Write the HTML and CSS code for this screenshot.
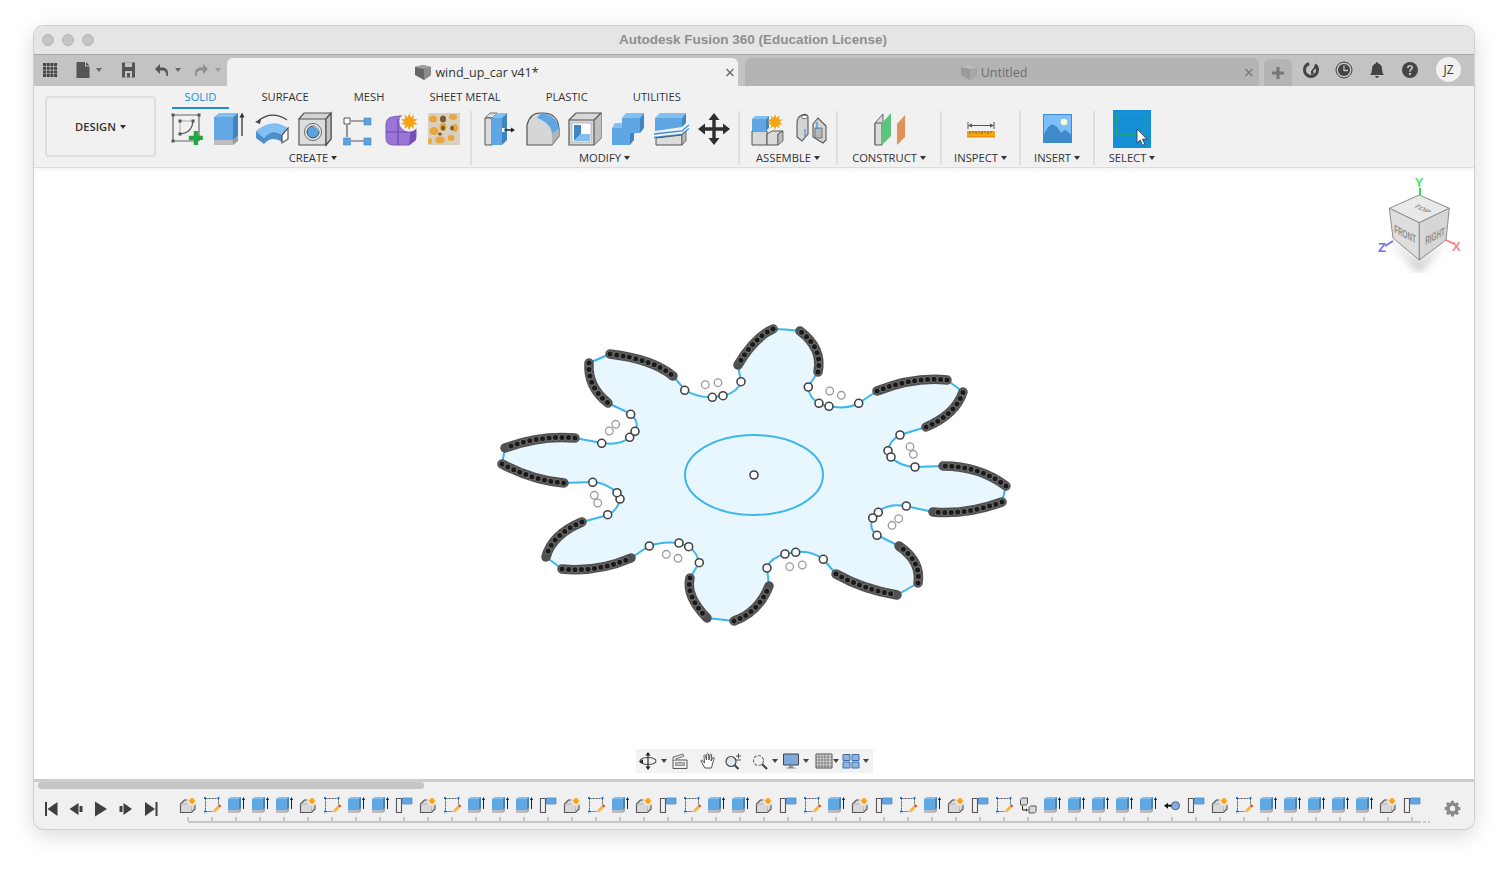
FILE: index.html
```html
<!DOCTYPE html>
<html lang="en">
<head>
<meta charset="utf-8">
<title>Autodesk Fusion 360 (Education License)</title>
<link rel="stylesheet" href="styles.css">
</head>
<body>
<svg class="defs" width="0" height="0" aria-hidden="true">
  <defs>
    <symbol id="star" viewBox="0 0 20 20"><path d="M10 0l1.8 5 3.8-3.2-1 4.9 5 .6-4.2 2.7 4.2 2.700-5 .6 1 4.900-3.800-3.200L10 20l-1.800-5-3.800 3.200 1-4.900-5-.6 4.200-2.700L.4 7.300l5-.6-1-4.900 3.800 3.200z" fill="#f5a313"/></symbol>

    <symbol id="i-sketch" viewBox="0 0 36 36">
      <path d="M5 4h26M5 4v26M5 30h26M31 4v26" fill="none" stroke="#666" stroke-width="1.2"/>
      <path d="M12 10h13M12 10v13" fill="none" stroke="#aaa"/>
      <path d="M25 10Q24 22 12 23" fill="none" stroke="#555" stroke-width="1.200"/>
      <path d="M3.500 2.500h3v3h-3zM29.500 2.500h3v3h-3zM3.500 28.500h3v3h-3zM10.500 8.500h3v3h-3zM23.500 8.500h3v3h-3zM10.500 21.500h3v3h-3z" fill="#555"/>
      <path d="M25.700 20h4.400v4.700h4.700v4.400h-4.700v4.900h-4.400v-4.900h-4.900v-4.400h4.900z" fill="#1fa83f"/>
    </symbol>
    <symbol id="i-extrude" viewBox="0 0 36 36">
      <path d="M3 29h19v5H3z" fill="#bdbdbd"/><path d="M22 29l5-4v5l-5 4z" fill="#9b9b9b"/>
      <path d="M3 6l5-4h19l-5 4z" fill="#82c0f4"/><path d="M3 6h19v23H3z" fill="#63a8e4"/><path d="M22 6l5-4v23l-5 4z" fill="#3f86c0"/>
      <path d="M31 25V4" stroke="#333" stroke-width="1.300"/><path d="M31 1.500l-2.500 5h5z" fill="#333"/>
    </symbol>
    <symbol id="i-revolve" viewBox="0 0 36 36">
      <path d="M4 10Q18-1 33 9" fill="none" stroke="#444" stroke-width="1.200"/><path d="M1 11l6-3-1 5z" fill="#444"/>
      <path d="M2 20Q18 6 34 17l-6 7Q18 16 10 27z" fill="#82c0f4"/>
      <path d="M2 20l8 7v6l-8-6zM10 27Q18 17 28 24v7Q18 24 10 33z" fill="#4a90cc"/>
      <path d="M28 24l6-7v11l-6 4z" fill="#fff" stroke="#555" stroke-width="1.200"/>
    </symbol>
    <symbol id="i-hole" viewBox="0 0 36 36">
      <path d="M2 8l5-6h27v26l-5 6z" fill="#d4d4d4" stroke="#555" stroke-width="1.200"/>
      <path d="M2 8h27v26H2z" fill="#dcdcdc" stroke="#555" stroke-width="1.200"/><path d="M29 8l5-6" stroke="#555" stroke-width="1.200"/>
      <path d="M29 8l5-6v26l-5 6z" fill="#c4c4c4" stroke="#555" stroke-width="1.200"/>
      <circle cx="16" cy="21" r="8.500" fill="#eee" stroke="#666"/><circle cx="16" cy="21" r="6" fill="#5aa2e0" stroke="#444"/>
      <path d="M15 15.500a6 6 0 0 1 6.500 6 5 5 0 0 0-6.500-6z" fill="#eee"/>
    </symbol>
    <symbol id="i-pattern" viewBox="0 0 36 36">
      <path d="M11 10h13M7 14v12M11 30h13" stroke="#555" stroke-width="1.200"/>
      <path d="M4 7h6v6H4z" fill="#fff" stroke="#555"/>
      <path d="M24 7h7v7h-7zM3.500 27h7v7h-7zM24 27h7v7h-7z" fill="#5aa2e0" stroke="#4a85ba" stroke-width=".6"/>
    </symbol>
    <symbol id="i-form" viewBox="0 0 36 36">
      <path d="M3 14Q3 7 9 6l15-2 9 8v14q0 4-3 5l-4 3H10q-7 0-7-7z" fill="#9b74d8" stroke="#7f5cb8"/>
      <path d="M28 13l5-2v15q0 4-3 5l-4 3z" fill="#7650b4"/>
      <path d="M3 21h25M15 8v26" stroke="#6a4aa8" stroke-width="1.200"/>
      <circle cx="26.300" cy="10.700" r="10" fill="#f1f1f1"/>
      <use href="#star" x="17.500" y="2" width="17.500" height="17.500"/>
    </symbol>
    <symbol id="i-mesh" viewBox="0 0 36 36">
      <path d="M2 2h32v32H2z" fill="#d9d0c2"/>
      <g fill="#e8a63c">
        <ellipse cx="7" cy="8" rx="4" ry="3.500"/><ellipse cx="27" cy="6" rx="4" ry="3"/><ellipse cx="8" cy="20" rx="4.500" ry="4"/><ellipse cx="17" cy="16" rx="3.500" ry="4"/><ellipse cx="29" cy="17" rx="3" ry="4"/><ellipse cx="14" cy="29" rx="5" ry="3.500"/><ellipse cx="25" cy="27" rx="3.500" ry="3"/><ellipse cx="4" cy="30" rx="2" ry="3"/>
      </g>
      <g fill="#7c5a26"><ellipse cx="17" cy="8" rx="3" ry="3.500"/><ellipse cx="17" cy="17" rx="2" ry="2.500"/><ellipse cx="26" cy="17" rx="1.800" ry="2.500"/><ellipse cx="14" cy="23" rx="2" ry="1.500"/></g>
    </symbol>
    <symbol id="i-press" viewBox="0 0 36 36">
      <path d="M4 7l5-5h7l-5 5z" fill="#e0e0e0" stroke="#555" stroke-width=".8"/><path d="M4 7h7v27H4z" fill="#dcdcdc" stroke="#555"/>
      <path d="M11 7l5-5h10l-5 5z" fill="#82c0f4"/><path d="M11 7h10v27H11z" fill="#5fa6e4"/><path d="M21 7l5-5v27l-5 5z" fill="#3f86c0"/>
      <path d="M23 19h8" stroke="#222" stroke-width="1.300"/><path d="M34 19l-4-2.500v5z" fill="#222"/><path d="M21 17v4h2.500v-4z" fill="#fff"/>
    </symbol>
    <symbol id="i-fillet" viewBox="0 0 36 36">
      <path d="M3 14Q6 2 16 2h3Q34 2 35 18v5l-6 9V34H3z" fill="#d6d6d6"/>
      <path d="M3 34V14Q6 2 16 2h3Q34 2 35 18v7l-7 9z" fill="none" stroke="#555" stroke-width="1.200"/>
      <path d="M17 2Q33 4 35 18l-7 5Q27 12 13 7z" fill="#5fa6e4"/>
      <path d="M28 23l7-5v7l-7 9z" fill="#b4b4b4"/>
    </symbol>
    <symbol id="i-shell" viewBox="0 0 36 36">
      <path d="M2 9l7-7h25v25l-7 7H2z" fill="#d8d8d8" stroke="#555" stroke-width="1.200"/>
      <path d="M27 9l7-7v25l-7 7z" fill="#c0c0c0"/><path d="M2 9h25v25M27 9l7-7" fill="none" stroke="#555" stroke-width="1.200"/>
      <path d="M5 12h19v19H5z" fill="#fff" stroke="#999" stroke-width=".6"/>
      <path d="M7 14h7v9l-7 7z" fill="#3f86c0"/><path d="M14 23h9v7H7z" fill="#82c0f4"/>
    </symbol>
    <symbol id="i-combine" viewBox="0 0 36 36">
      <path d="M12 7l4-5h18l-4 5z" fill="#82c0f4"/><path d="M2 17l3-5h10v5z" fill="#82c0f4"/>
      <path d="M12 7h18v15H20v12H2V17h10z" fill="#5fa6e4"/><path d="M30 7l4-5v15l-4 5zM20 22h5l-5 5zM20 27l4-5v7l-4 5z" fill="#3f86c0"/>
    </symbol>
    <symbol id="i-split" viewBox="0 0 36 36">
      <path d="M2 7l5-5h26l-4 5z" fill="#82c0f4"/><path d="M2 7h27v9l-27 4z" fill="#5fa6e4"/><path d="M29 7l4-5v10l-4 4z" fill="#3f86c0"/>
      <path d="M1 23l28-3 7-6" fill="none" stroke="#2f8ee0" stroke-width="1.300"/><path d="M1 26.500l28-3 7-6" fill="none" stroke="#2f8ee0" stroke-width="1.300"/>
      <path d="M3 27l26-3v10H3z" fill="#dcdcdc" stroke="#555"/><path d="M29 24l4-4v10l-4 4z" fill="#bbb" stroke="#555" stroke-width=".8"/>
    </symbol>
    <symbol id="i-move" viewBox="0 0 36 36">
      <path d="M18 2l5.500 7h-3.800v7.300H27v-3.800l7 5.500-7 5.500v-3.800h-7.300V27h3.800L18 34l-5.500-7h3.800v-7.300H9v3.800L2 18l7-5.500v3.800h7.300V9h-3.800z" fill="#2e2e2e"/>
    </symbol>
    <symbol id="i-component" viewBox="0 0 36 36">
      <path d="M3 20h15v14H3z" fill="#d8d8d8" stroke="#555"/><path d="M18 23l5-3h11l-5 3v11H18z" fill="#dcdcdc" stroke="#555"/><path d="M29 23l5-3v10l-5 4z" fill="#bdbdbd" stroke="#555" stroke-width=".8"/>
      <path d="M3 8l3-3h14l-3 3z" fill="#82c0f4"/><path d="M3 8h14v12H3z" fill="#5fa6e4"/><path d="M17 8l3-3v12l-3 3z" fill="#3f86c0"/>
      <use href="#star" x="18" y="3" width="16" height="16"/>
    </symbol>
    <symbol id="i-joint" viewBox="0 0 36 36">
      <path d="M5 12Q5 6 10 4q5-2 6 2v17l-6 7-5-4z" fill="#d4d4d4" stroke="#555" stroke-width="1.100"/><ellipse cx="12.500" cy="6" rx="3" ry="1.700" fill="#fff" stroke="#555" stroke-width=".8"/>
      <path d="M21 13l5-6 8 8v14l-3 3-10-6z" fill="#d4d4d4" stroke="#555" stroke-width="1.100"/><path d="M23 17h7v10h-7z" fill="#b8b8b8" stroke="#555" stroke-width=".7"/>
      <path d="M13 18v8M25 11v7" stroke="#2f8ee0" stroke-width="1.200"/>
    </symbol>
    <symbol id="i-plane" viewBox="0 0 36 36">
      <path d="M4 12l8-9v24l-8 7z" fill="#dcdcdc" stroke="#555" stroke-width=".9"/>
      <path d="M4 12h7v22H4z" fill="#dcdcdc" stroke="#555"/>
      <path d="M11 12l9-10v23l-9 9z" fill="#5cc47c"/><path d="M26 13l8-9v22l-8 8z" fill="#e0925a"/>
    </symbol>
    <symbol id="i-measure" viewBox="0 0 36 36">
      <path d="M4 20h28v6H4z" fill="#f5a313"/>
      <path d="M4 26h28" stroke="#d88a05"/>
      <path d="M7 20v3M10 20v2M13 20v3M16 20v2M19 20v3M22 20v2M25 20v3M28 20v2" stroke="#7a4d00" stroke-width=".8"/>
      <path d="M5 11v7M31 11v7M6 14.500h24" stroke="#555" stroke-width="1"/>
      <path d="M5 14.500l4-2v4zM31 14.500l-4-2v4z" fill="#555"/>
    </symbol>
    <symbol id="i-insert" viewBox="0 0 36 36">
      <path d="M4 3h29v29H4z" fill="#7cc0fb"/>
      <path d="M4 26Q10 11 15 14q4 2 7 8 4-4 6-2t5 4v8H4z" fill="#3f8ac8"/>
      <circle cx="25" cy="11" r="3.300" fill="#fdfbd2"/>
      <path d="M4.500 3.500h28v28h-28z" fill="none" stroke="#3f8ac8"/>
    </symbol>
    <symbol id="i-select" viewBox="0 0 38 38">
      <path d="M0 0h38v38H0z" fill="#1590d6"/>
      <path d="M3.500 3.500h27.500v21H3.500z" fill="none" stroke="#26b34a" stroke-dasharray="3 2"/>
      <path d="M24 19v14l3.200-3 2.300 5.300 2.300-1-2.300-5.200h4.300z" fill="#fff" stroke="#333" stroke-width=".8"/>
    </symbol>

    <symbol id="t-new" viewBox="0 0 24 24">
      <path d="M4.500 11l4-4h10.500v9l-3.500 3.500h-11z" fill="#d8d8d8" stroke="#555" stroke-width="1.100"/>
      <path d="M4.500 11h11v8.500M15.500 11l3.500-4" fill="none" stroke="#aaa" stroke-width=".6"/>
      <circle cx="16" cy="8" r="4.800" fill="#f0f0f0"/><use href="#star" x="12" y="4" width="8" height="8"/>
    </symbol>
    <symbol id="t-sketch" viewBox="0 0 24 24">
      <path d="M5.500 5.500h13M5.500 5.500v13M5.500 18.500h7M18.500 5.500v7" fill="none" stroke="#555" stroke-dasharray="2 1"/>
      <path d="M4 4h2v2H4zM17.500 4h2v2h-2zM4 17.500h2v2H4z" fill="#1d80d8"/>
      <path d="M13 19.500l1-3 4-4 2 2-4 4z" fill="#f0b840"/><path d="M18 12.500l1.300-1.300 2 2-1.300 1.300z" fill="#ea3a4a"/>
    </symbol>
    <symbol id="t-extrude" viewBox="0 0 24 24">
      <path d="M4 17h10.500v3H4z" fill="#bdbdbd"/><path d="M14.500 17l2.500-2v3l-2.500 2z" fill="#a5a5a5"/>
      <path d="M4 6l2.500-2h10.500l-2.500 2z" fill="#82c0f4"/><path d="M4 6h10.500v11H4z" fill="#5fa6e4"/><path d="M14.500 6L17 4v11l-2.500 2z" fill="#3f86c0"/>
      <path d="M19.500 16V5.500" stroke="#222"/><path d="M19.500 4l-1.600 3h3.200z" fill="#222"/>
    </symbol>
    <symbol id="t-flag" viewBox="0 0 24 24">
      <path d="M4.500 5.500h5v14h-5z" fill="#f1f1f1" stroke="#555" stroke-width="1.100"/>
      <path d="M10.500 5h9.500v6h-9.500z" fill="#5fa6e4" stroke="#4a85ba" stroke-width=".7"/>
    </symbol>
    <symbol id="t-move" viewBox="0 0 24 24">
      <path d="M4.500 6.500l1.500-1.500h5.500v5.500l-1.500 1.500h-5.500z" fill="#d8d8d8" stroke="#555"/>
      <path d="M13 14.500l1.500-1.500h5.500v5.500l-1.500 1.500h-5.500z" fill="#d8d8d8" stroke="#555"/>
      <path d="M6.500 13v4h4" fill="none" stroke="#222"/><path d="M12 17l-2-1.500v3z" fill="#222"/>
    </symbol>
    <symbol id="t-joint" viewBox="0 0 24 24">
      <circle cx="15.500" cy="12.700" r="4" fill="#8aaedc" stroke="#3f5f8a"/>
      <path d="M11.500 12.700H7" stroke="#111" stroke-width="2"/><path d="M4 12.700l4-3v6z" fill="#111"/>
    </symbol>
  </defs>
</svg>

<div class="window">
  <header class="titlebar">
    <div class="lights"><span class="light"></span><span class="light"></span><span class="light"></span></div>
    <div class="title">Autodesk Fusion 360 (Education License)</div>
  </header>

  <div class="tabbar">
    <div class="quick">
      <svg class="q-grid" width="16" height="16" viewBox="0 0 16 16"><path d="M1 1h3v3H1zM4.700 1h3v3h-3zM8.400 1h3v3h-3zM12.100 1h3v3h-3zM1 4.700h3v3H1zM4.700 4.700h3v3h-3zM8.400 4.700h3v3h-3zM12.100 4.700h3v3h-3zM1 8.400h3v3H1zM4.700 8.400h3v3h-3zM8.400 8.400h3v3h-3zM12.100 8.400h3v3h-3zM1 12.100h3v3H1zM4.700 12.100h3v3h-3zM8.400 12.100h3v3h-3zM12.100 12.100h3v3h-3z" fill="#444"/></svg>
      <svg class="q-file" width="14" height="16" viewBox="0 0 14 16"><path d="M.500 0h8.500v4.500h4.500V16H.500zM10 0l3.500 3.500H10z" fill="#555"/></svg>
      <span class="caret caret-q"></span>
      <svg class="q-save" width="15" height="16" viewBox="0 0 15 16"><path d="M1 .500h13v15H1z" fill="#555"/><path d="M4 .500h7v4.500H4zM4 9h7v6.500H9V11H6v4.500H4z" fill="#c3c3c3"/></svg>
      <svg class="q-undo" width="15" height="16" viewBox="0 0 15 16"><path d="M6 2L1 7l5 5V8.500h3q3 0 3.500 5.500h1.500q1-8-5-8.500H6z" fill="#555"/></svg>
      <span class="caret caret-q"></span>
      <svg class="q-redo" width="15" height="16" viewBox="0 0 15 16"><path d="M9 2l5 5-5 5V8.500H6Q3 8.500 2.500 14H1q-1-8 5-8.500h3z" fill="#8f8f8f"/></svg>
      <span class="caret caret-q caret-dim"></span>
    </div>
    <div class="doc-tab doc-tab-active">
      <span class="doc-name">
        <svg width="16" height="16" viewBox="0 0 16 16"><path d="M0 3l8-2 8 2v8l-7 5-9-5z" fill="#666"/><path d="M9 5l7-2v8l-7 5z" fill="#8c8c8c"/><path d="M0 3l8-2 8 2-7 2z" fill="#a0a0a0"/></svg>
        wind_up_car v41*
      </span>
      <span class="doc-close">×</span>
    </div>
    <div class="doc-tab doc-tab-idle">
      <span class="doc-name">
        <svg width="16" height="16" viewBox="0 0 16 16"><path d="M0 3l8-2 8 2v8l-7 5-9-5z" fill="#9b9b9b"/><path d="M9 5l7-2v8l-7 5z" fill="#a8a8a8"/><path d="M0 3l8-2 8 2-7 2z" fill="#bdbdbd"/></svg>
        Untitled
      </span>
      <span class="doc-close">×</span>
    </div>
    <div class="new-tab"><svg width="14" height="14" viewBox="0 0 14 14"><path d="M5.500 1h3v4.500H13v3H8.500V13h-3V8.500H1v-3h4.500z" fill="#777"/></svg></div>
    <div class="status">
      <svg width="18" height="18" viewBox="0 0 18 18"><circle cx="9" cy="9" r="6.500" fill="none" stroke="#444" stroke-width="3" stroke-dasharray="28 6"/><path d="M9 10l5-6 1.500 1.500L11 10l1 3-3 .5z" fill="#444"/></svg>
      <svg width="18" height="18" viewBox="0 0 18 18"><circle cx="9" cy="9" r="8" fill="none" stroke="#444"/><circle cx="9" cy="9" r="6" fill="#444"/><path d="M9 4.500V9.500h4" fill="none" stroke="#c3c3c3" stroke-width="1.300"/></svg>
      <svg width="18" height="18" viewBox="0 0 18 18"><path d="M9 1q1.300 0 1.300 1.500 3.700 1 3.700 5.500 0 4 2 6H2q2-2 2-6 0-4.500 3.700-5.500Q7.700 1 9 1zM7 15h4q-.5 2-2 2t-2-2z" fill="#444"/></svg>
      <svg width="18" height="18" viewBox="0 0 18 18"><circle cx="9" cy="9" r="8" fill="#444"/><path d="M6 7q0-3 3-3t3 2.700q0 1.500-1.500 2.300-.8.500-.8 1.800H8.100q0-2 1.200-2.800 1-.6 1-1.400 0-1-1.300-1T7.800 7z" fill="#c3c3c3"/><path d="M8 12h2v2H8z" fill="#c3c3c3"/></svg>
      <span class="avatar">JZ</span>
    </div>
  </div>

  <div class="ribbon">
    <button class="design">DESIGN<span class="caret caret-d"></span></button>
    <div class="ribbon-main">
      <nav class="tabs">
        <span class="tab tab-on">SOLID</span>
        <span class="tab">SURFACE</span>
        <span class="tab">MESH</span>
        <span class="tab">SHEET METAL</span>
        <span class="tab">PLASTIC</span>
        <span class="tab">UTILITIES</span>
      </nav>
      <div class="groups">
        <section class="group g-create">
          <div class="icons">
            <svg class="ico"><use href="#i-sketch"/></svg><svg class="ico"><use href="#i-extrude"/></svg><svg class="ico"><use href="#i-revolve"/></svg><svg class="ico"><use href="#i-hole"/></svg><svg class="ico"><use href="#i-pattern"/></svg><svg class="ico"><use href="#i-form"/></svg><svg class="ico"><use href="#i-mesh"/></svg>
          </div>
          <div class="label label-shift">CREATE<span class="caret"></span></div>
        </section>
        <section class="group g-modify">
          <div class="icons">
            <svg class="ico"><use href="#i-press"/></svg><svg class="ico"><use href="#i-fillet"/></svg><svg class="ico"><use href="#i-shell"/></svg><svg class="ico"><use href="#i-combine"/></svg><svg class="ico"><use href="#i-split"/></svg><svg class="ico"><use href="#i-move"/></svg>
          </div>
          <div class="label label-shift">MODIFY<span class="caret"></span></div>
        </section>
        <section class="group g-assemble">
          <div class="icons"><svg class="ico"><use href="#i-component"/></svg><svg class="ico"><use href="#i-joint"/></svg></div>
          <div class="label">ASSEMBLE<span class="caret"></span></div>
        </section>
        <section class="group g-construct">
          <div class="icons"><svg class="ico"><use href="#i-plane"/></svg></div>
          <div class="label">CONSTRUCT<span class="caret"></span></div>
        </section>
        <section class="group g-inspect">
          <div class="icons"><svg class="ico"><use href="#i-measure"/></svg></div>
          <div class="label">INSPECT<span class="caret"></span></div>
        </section>
        <section class="group g-insert">
          <div class="icons"><svg class="ico"><use href="#i-insert"/></svg></div>
          <div class="label">INSERT<span class="caret"></span></div>
        </section>
        <section class="group g-select">
          <div class="icons"><svg class="ico ico-select"><use href="#i-select"/></svg></div>
          <div class="label">SELECT<span class="caret"></span></div>
        </section>
      </div>
    </div>
  </div>

  <main class="canvas">
    <svg class="sketch" viewBox="34 168 1440 611" width="1440" height="611">
      <defs>
        <g id="arcs">
          <path d="M610 354Q652.500 359 673 376"/><path d="M589 363Q587.500 387 608 403"/>
          <path d="M575 438Q540 435 505 448"/><path d="M502 464Q533 480.500 564 483"/>
          <path d="M582 522Q552 534.500 546 557"/><path d="M562 569Q597.500 572.500 631 558"/>
          <path d="M690 578Q685.500 596 707 618"/><path d="M734 621Q758.500 612.500 769 586"/>
          <path d="M836 574Q863.500 589.500 897 595"/><path d="M918 583Q921.500 561.500 899 546"/>
          <path d="M1002 502Q966.500 515 933 512"/><path d="M1006 486Q979.500 466 943 466"/>
          <path d="M926 427Q955.500 414.500 963 392"/><path d="M947 380Q914 376.500 877 391"/>
          <path d="M818 372Q823 348.500 800 331"/><path d="M773 329Q754.500 337 738 365"/>
        </g>
      </defs>
      <path class="profile" d="M773 329Q786 329 800 331Q823 348.500 818 372L808 387Q809 398 819 403Q823 406 829 406Q846 410 859 403L877 391Q914 376.500 947 380L963 392Q955.500 414.500 926 427L900 435Q889 441 888 451Q888 455 891 457Q899 466 915 467L943 466Q979.500 466 1006 486L1002 502Q966.500 515 933 512L906 506Q888 503 878 512L873 518Q868 528 877 535L899 546Q921.500 561.500 918 583L897 595Q863.500 589.500 836 574L823 559Q811 550 796 552L785 554Q770 558 767 568L769 586Q758.500 612.500 734 621L707 618Q685.500 596 690 578L699 563Q697 552 689 547L679 543Q662 541 649 546L631 558Q597.500 572.500 562 569L546 557Q552 534.500 582 522L608 515Q618 510 620 499L617 493Q607 483 593 482L564 483Q533 480.500 502 464L505 448Q540 435 575 438L602 443Q620 446 630 437L635 431Q640 423 631 414L608 403Q587.500 387 589 363L610 354Q652.500 359 673 376L685 390Q698 398 712 397L723 396Q738 392 741 382L738 365Q754.500 337 773 329Z"/>
      <ellipse class="hub" cx="754" cy="475" rx="69" ry="40"/>
      <use href="#arcs" class="arc-band"/>
      <use href="#arcs" class="arc-ring"/>
      <use href="#arcs" class="arc-dots"/>
      <g class="pt-ghost">
        <circle cx="705.300" cy="384.700" r="3.800"/><circle cx="718" cy="382.700" r="3.800"/><circle cx="609.300" cy="431" r="3.800"/><circle cx="615.700" cy="424.300" r="3.800"/>
        <circle cx="829.700" cy="391" r="3.800"/><circle cx="841.300" cy="395.300" r="3.800"/><circle cx="910" cy="446.700" r="3.800"/><circle cx="913.300" cy="454.300" r="3.800"/>
        <circle cx="594.300" cy="495.300" r="3.800"/><circle cx="597.700" cy="503" r="3.800"/><circle cx="666.300" cy="554.300" r="3.800"/><circle cx="678" cy="558.300" r="3.800"/>
        <circle cx="789.700" cy="566.700" r="3.800"/><circle cx="802.300" cy="565" r="3.800"/><circle cx="892" cy="525.300" r="3.800"/><circle cx="898.700" cy="518.700" r="3.800"/>
      </g>
      <g class="pt-open">
        <circle cx="808.300" cy="387" r="4"/><circle cx="819" cy="403.300" r="4"/><circle cx="829" cy="406.300" r="4"/><circle cx="858.700" cy="403.300" r="4"/>
        <circle cx="900" cy="435" r="4"/><circle cx="888" cy="450.700" r="4"/><circle cx="891" cy="457" r="4"/><circle cx="915" cy="467" r="4"/>
        <circle cx="906.300" cy="506" r="4"/><circle cx="878.300" cy="512.300" r="4"/><circle cx="872.700" cy="518" r="4"/><circle cx="877" cy="535.300" r="4"/>
        <circle cx="823.300" cy="559.300" r="4"/><circle cx="795.700" cy="552.300" r="4"/><circle cx="785" cy="554" r="4"/><circle cx="767" cy="568" r="4"/>
        <circle cx="699.300" cy="562.700" r="4"/><circle cx="688.700" cy="546.700" r="4"/><circle cx="679" cy="543" r="4"/><circle cx="649.300" cy="546" r="4"/>
        <circle cx="607.700" cy="514.700" r="4"/><circle cx="620" cy="499" r="4"/><circle cx="617" cy="492.700" r="4"/><circle cx="592.700" cy="482.300" r="4"/>
        <circle cx="601.700" cy="443.300" r="4"/><circle cx="629.700" cy="437.300" r="4"/><circle cx="635" cy="431.300" r="4"/><circle cx="630.700" cy="414.300" r="4"/>
        <circle cx="684.700" cy="390.300" r="4"/><circle cx="712.300" cy="397.300" r="4"/><circle cx="723" cy="395.700" r="4"/><circle cx="741" cy="381.700" r="4"/>
        <circle cx="754" cy="475" r="4"/>
      </g>
    </svg>

    <svg class="navcube" width="90" height="104" viewBox="0 -14 90 104">
      <defs><filter id="cube-shadow" x="-50%" y="-50%" width="200%" height="200%"><feGaussianBlur stdDeviation="5"/></filter></defs>
      <path d="M16 55L45 80 72 57 45 90z" fill="#888" opacity=".55" filter="url(#cube-shadow)"/>
      <path d="M45.300 12L75.300 25.300 45.300 39.700 15.300 25.300z" fill="#e9e9e9" stroke="#8c8c8c"/>
      <path d="M15.300 25.300L45.300 39.700V77L19 55z" fill="#dedede" stroke="#8c8c8c"/>
      <path d="M75.300 25.300L45.300 39.700V77L72 57z" fill="#d6d6d6" stroke="#8c8c8c"/>
      <text class="cube-t" transform="matrix(.74 .36 -.74 .36 46 27)" text-anchor="middle">TOP</text>
      <text class="cube-t" transform="matrix(.66 .34 0 1.200 31 55)" text-anchor="middle">FRONT</text>
      <text class="cube-t" transform="matrix(.66 -.34 0 1.200 61 57)" text-anchor="middle">RIGHT</text>
      <path d="M46 12V5" stroke="#3fd45a" stroke-width="2"/>
      <path d="M19 58l-8 5" stroke="#6b6bf0" stroke-width="1.500"/>
      <path d="M72 57l8 4" stroke="#f08080" stroke-width="1.500"/>
      <text class="axis axis-y" x="45" y="4" text-anchor="middle">Y</text>
      <text class="axis axis-z" x="4" y="69">Z</text>
      <text class="axis axis-x" x="78" y="68">X</text>
    </svg>

    <div class="viewbar">
      <svg width="20" height="20" viewBox="0 0 20 20"><ellipse cx="10" cy="10" rx="8" ry="3.500" fill="none" stroke="#555" stroke-width="1.100"/><path d="M10 2v16" stroke="#333" stroke-width="1.300"/><path d="M10 1l-2.500 3.500h5zM10 19l-2.500-3.500h5zM1 10.500l4-2v4z" fill="#222"/></svg>
      <span class="caret caret-v"></span>
      <svg class="v-cam" width="18" height="18" viewBox="0 0 18 18"><path d="M2 8h14v8.500H2z" fill="#f1f1f1" stroke="#555"/><path d="M4.500 10.500h9v3h-9z" fill="#bbb" stroke="#666" stroke-width=".6"/><path d="M2 8l0-3 10-3 .7 2.300L5 7v1" fill="#ddd" stroke="#555" stroke-width=".8"/></svg>
      <svg class="v-hand" width="18" height="18" viewBox="0 0 18 18"><path d="M6 16Q3 11 2 9q0-1.500 1.500-.5L5.500 11 5 3.500q.5-1.500 1.500 0L7.500 8l.3-6q1-1.500 1.700 0L10 8l1.200-5.500q1-1 1.500.5L12 9l2-3.500q1.300-.5 1.200 1L13.500 12 12.500 16z" fill="#fff" stroke="#444" stroke-width=".9" stroke-linejoin="round"/></svg>
      <svg class="v-zoom" width="18" height="18" viewBox="0 0 18 18"><circle cx="7" cy="9.500" r="5" fill="#dce9f5" stroke="#444" stroke-width="1.200"/><path d="M10.500 13l4 4" stroke="#444" stroke-width="2.200"/><path d="M14.500 1.500v5M12 4h5M12 8h5" stroke="#555"/></svg>
      <svg class="v-fit" width="18" height="18" viewBox="0 0 18 18"><circle cx="7.500" cy="8.500" r="5" fill="#f1f1f1" stroke="#777" stroke-width="1.200" stroke-dasharray="3 1.500"/><path d="M11 12l5 5" stroke="#444" stroke-width="2.200"/></svg>
      <span class="caret caret-v"></span>
      <svg class="v-disp" width="18" height="18" viewBox="0 0 18 18"><path d="M1.500 2h15v11h-15z" fill="#7ea9d8" stroke="#444"/><path d="M7 13.500h4v2h2.500v1h-9v-1H7z" fill="#888"/></svg>
      <span class="caret caret-v"></span>
      <svg class="v-grid" width="18" height="18" viewBox="0 0 18 18"><path d="M1 2h16v14H1z" fill="#ddd" stroke="#555"/><path d="M4 2v14M7 2v14M10 2v14M13 2v14M1 5h16M1 8h16M1 11h16M1 14h16" stroke="#666" stroke-width=".7"/></svg>
      <span class="caret caret-v caret-tight"></span>
      <svg class="v-views" width="18" height="18" viewBox="0 0 18 18"><path d="M1 2.500h7v6H1zM10 2.500h7v6h-7zM1 10h7v6H1zM10 10h7v6h-7z" fill="#8fb4de" stroke="#3f6ea3"/></svg>
      <span class="caret caret-v"></span>
    </div>
  </main>

  <footer class="timeline">
    <div class="scroll"><div class="thumb"></div></div>
    <div class="tl-row">
      <div class="player">
        <svg width="25" height="18" viewBox="0 0 25 18"><path d="M7 2h2v14H7zM19.500 2v14l-10-7z" fill="#3f3f3f"/></svg>
        <svg width="25" height="18" viewBox="0 0 25 18"><path d="M15.500 3v12L6.500 9zM16.500 6h3v6h-3z" fill="#3f3f3f"/></svg>
        <svg width="25" height="18" viewBox="0 0 25 18"><path d="M7 1.500v15l12-7.500z" fill="#3f3f3f"/></svg>
        <svg width="25" height="18" viewBox="0 0 25 18"><path d="M10.500 3v12l8.500-6zM6.500 6h3v6h-3z" fill="#3f3f3f"/></svg>
        <svg width="25" height="18" viewBox="0 0 25 18"><path d="M7 2v14l10-7zM17.500 2h2v14h-2z" fill="#3f3f3f"/></svg>
      </div>
      <div class="track">
        <svg class="tl"><use href="#t-new"/></svg><svg class="tl"><use href="#t-sketch"/></svg><svg class="tl"><use href="#t-extrude"/></svg><svg class="tl"><use href="#t-extrude"/></svg><svg class="tl"><use href="#t-extrude"/></svg><svg class="tl"><use href="#t-new"/></svg><svg class="tl"><use href="#t-sketch"/></svg><svg class="tl"><use href="#t-extrude"/></svg><svg class="tl"><use href="#t-extrude"/></svg><svg class="tl"><use href="#t-flag"/></svg><svg class="tl"><use href="#t-new"/></svg><svg class="tl"><use href="#t-sketch"/></svg><svg class="tl"><use href="#t-extrude"/></svg><svg class="tl"><use href="#t-extrude"/></svg><svg class="tl"><use href="#t-extrude"/></svg><svg class="tl"><use href="#t-flag"/></svg><svg class="tl"><use href="#t-new"/></svg><svg class="tl"><use href="#t-sketch"/></svg><svg class="tl"><use href="#t-extrude"/></svg><svg class="tl"><use href="#t-new"/></svg><svg class="tl"><use href="#t-flag"/></svg><svg class="tl"><use href="#t-sketch"/></svg><svg class="tl"><use href="#t-extrude"/></svg><svg class="tl"><use href="#t-extrude"/></svg><svg class="tl"><use href="#t-new"/></svg><svg class="tl"><use href="#t-flag"/></svg><svg class="tl"><use href="#t-sketch"/></svg><svg class="tl"><use href="#t-extrude"/></svg><svg class="tl"><use href="#t-new"/></svg><svg class="tl"><use href="#t-flag"/></svg><svg class="tl"><use href="#t-sketch"/></svg><svg class="tl"><use href="#t-extrude"/></svg><svg class="tl"><use href="#t-new"/></svg><svg class="tl"><use href="#t-flag"/></svg><svg class="tl"><use href="#t-sketch"/></svg><svg class="tl"><use href="#t-move"/></svg><svg class="tl"><use href="#t-extrude"/></svg><svg class="tl"><use href="#t-extrude"/></svg><svg class="tl"><use href="#t-extrude"/></svg><svg class="tl"><use href="#t-extrude"/></svg><svg class="tl"><use href="#t-extrude"/></svg><svg class="tl"><use href="#t-joint"/></svg><svg class="tl"><use href="#t-flag"/></svg><svg class="tl"><use href="#t-new"/></svg><svg class="tl"><use href="#t-sketch"/></svg><svg class="tl"><use href="#t-extrude"/></svg><svg class="tl"><use href="#t-extrude"/></svg><svg class="tl"><use href="#t-extrude"/></svg><svg class="tl"><use href="#t-extrude"/></svg><svg class="tl"><use href="#t-extrude"/></svg><svg class="tl"><use href="#t-new"/></svg><svg class="tl"><use href="#t-flag"/></svg>
      </div>
      <svg class="gear" width="17" height="17" viewBox="-1 -1 22 22"><path d="M8.300 0h3.400l.5 2.500 1.700.7 2.100-1.400 2.400 2.400-1.400 2.100.7 1.700 2.500.5v3.400l-2.500.5-.7 1.700 1.400 2.100-2.400 2.400-2.100-1.400-1.700.7-.5 2.500H8.300l-.5-2.500-1.700-.7-2.100 1.400-2.400-2.400 1.400-2.100-.7-1.700L-.2 11.700V8.300l2.500-.5.700-1.700-1.400-2.100 2.400-2.400 2.100 1.400 1.700-.7zM10 6.500a3.500 3.500 0 1 0 0 7 3.500 3.500 0 0 0 0-7z" fill="#8a8a8a" fill-rule="evenodd"/></svg>
    </div>
  </footer>
</div>
</body>
</html>
```
FILE: styles.css
```css
* { box-sizing: border-box; }
html, body { margin: 0; padding: 0; background: #fff; }
body { height: 871px; overflow: hidden; font-family: "Open Sans", "Liberation Sans", sans-serif; color: #333; }
.defs { position: absolute; }

.window {
  position: relative; width: 1440px; height: 803px; margin: 26px 0 0 34px;
  border-radius: 10px; overflow: hidden; background: #f1f1f1;
  display: flex; flex-direction: column;
}
body::before {
  content: ""; position: absolute; left: 34px; top: 26px; width: 1440px; height: 803px;
  border-radius: 10px; box-shadow: 0 0 0 1px #cfcfcf, 0 6px 22px rgba(0,0,0,.16);
}

.titlebar {
  height: 29px; flex: none; background: #e6e5e6; border-bottom: 1px solid #a8a6a8;
  display: flex; align-items: center; padding-bottom: 1px;
}
.lights { display: flex; gap: 8px; margin-left: 8px; margin-top: 1px; }
.light { width: 12px; height: 12px; border-radius: 50%; background: #c6c5c6; border: 1px solid #b3b2b3; }
.title {
  flex: 1; text-align: center; margin-right: 62px; font: bold 13.5px "Liberation Sans", sans-serif; color: #8f8e8f;
}

.tabbar {
  height: 31px; flex: none; background: #c3c3c3; display: flex; align-items: flex-end;
}
.quick { width: 193px; height: 31px; display: flex; align-items: center; padding: 0 0 2px 8px; flex: none; }
.q-file { margin-left: 18px; }
.q-save { margin-left: 20px; }
.q-undo { margin-left: 18px; }
.q-redo { margin-left: 13px; }
.caret {
  display: inline-block; width: 0; height: 0; margin-left: 3px; vertical-align: 2px;
  border-left: 3px solid transparent; border-right: 3px solid transparent; border-top: 4px solid #333;
}
.caret-q { border-left-width: 3.5px; border-right-width: 3.5px; border-top: 4.5px solid #666; margin-left: 6px; }
.caret-q + .q-save { margin-left: 19px; }
.caret-dim { border-top-color: #999; }
.doc-tab {
  height: 28px; width: 511px; flex: none; display: flex; align-items: center; justify-content: center;
  position: relative; font-size: 12.5px; border-radius: 6px 6px 0 0;
}
.doc-tab-active { background: #f1f1f1; color: #333; }
.doc-tab-idle { background: #b4b4b4; color: #6c6c6c; width: 514px; margin-left: 7px; }
.doc-name { display: flex; align-items: center; gap: 4px; margin-right: 11px; }
.doc-tab-idle .doc-name { margin-right: 16px; }
.doc-close { position: absolute; right: 2px; width: 12px; text-align: center; font-size: 18px; line-height: 20px; color: #666; }
.doc-tab-idle .doc-close { right: 4px; color: #777; }
.new-tab {
  width: 28px; height: 27px; margin-left: 5px; background: #b4b4b4; border-radius: 6px 6px 0 0;
  display: flex; align-items: center; justify-content: center; flex: none;
}
.status { height: 31px; display: flex; align-items: center; padding: 0 0 2px 10px; gap: 15px; }
.avatar {
  width: 25px; height: 25px; border-radius: 50%; background: #f1f1f1; font-size: 12px; color: #333;
  display: flex; align-items: center; justify-content: center; margin-left: 2px;
}

.ribbon {
  height: 82px; flex: none; background: #f1f1f1; border-bottom: 1px solid #dcdcdc;
  display: flex; align-items: flex-start;
}
.design {
  width: 111px; height: 61px; margin: 10px 0 0 11px; flex: none;
  background: #f1f1f1; border: 2px solid #dedede; border-radius: 4px;
  font: 600 11.2px "Open Sans", sans-serif; color: #333; padding: 0;
}
.caret-d { margin-left: 4px; }
.ribbon-main { margin-left: 8px; display: flex; flex-direction: column; }
.tabs { height: 23px; display: flex; gap: 20px; padding-left: 8px; }
.tab {
  padding: 4px 12.5px 0; font-size: 11.2px; line-height: 13px; color: #333; height: 23px; white-space: nowrap;
}
.tab-on { color: #1a8fd6; border-bottom: 2px solid #1a8fd6; }
.groups { display: flex; margin-top: 2px; height: 54px; }
.group {
  display: flex; flex-direction: column; align-items: center; flex: none;
  border-right: 2px solid #dedede;
}
.g-create { width: 308px; padding-right: 5px; }
.g-modify { width: 268px; padding-left: 2px; }
.g-assemble { width: 98px; }
.g-construct { width: 104px; }
.g-inspect { width: 79px; }
.g-insert { width: 74px; }
.g-select { width: 74px; border-right: 0; }
.icons { display: flex; height: 36px; justify-content: center; }
.ico { width: 36px; height: 36px; margin: 0 3.5px; flex: none; }
.ico-select { width: 38px; height: 38px; margin: -1px 0; }
.label { font-size: 11.2px; line-height: 14px; margin-top: 4px; white-space: nowrap; color: #333; }
.label-shift { margin-right: 3px; }

.canvas { height: 611px; flex: none; position: relative; background: #fff; }
.canvas::before { content: ""; position: absolute; left: 0; right: 0; top: 0; height: 3px; background: #f8f8f8; }
.sketch { display: block; }
.profile { fill: #e8f7fe; stroke: #3db6ea; stroke-width: 2; stroke-linejoin: round; }
.hub { fill: #e8f7fe; stroke: #3db6ea; stroke-width: 2; }
.arc-band { fill: none; stroke: #505050; stroke-width: 9.5; stroke-linecap: round; }
.arc-ring { fill: none; stroke: #6c6c6c; stroke-width: 7; stroke-linecap: round; stroke-dasharray: 0 6.5; }
.arc-dots { fill: none; stroke: #1a1a1a; stroke-width: 5; stroke-linecap: round; stroke-dasharray: 0 6.5; }
.pt-open circle { fill: #fff; stroke: #444; stroke-width: 1.6; }
.pt-ghost circle { fill: #fff; fill-opacity: .6; stroke: #9a9a9a; stroke-width: 1.3; }

.navcube { position: absolute; left: 1340px; top: 1px; }
.cube-t { font: bold 9.5px "Liberation Sans", sans-serif; fill: #8e8e8e; }
.axis { font: bold 13px "Liberation Sans", sans-serif; }
.axis-y { fill: #4fe36c; }
.axis-z { fill: #6f6ff5; }
.axis-x { fill: #f58a8a; }

.viewbar {
  position: absolute; left: 602px; top: 581px; width: 237px; height: 24px;
  background: #f2f2f2; display: flex; align-items: center; padding-left: 2px;
}
.caret-v { margin-left: 3px; border-top-color: #444; }
.caret-tight { margin-left: 0; }
.v-cam { margin-left: 4px; }
.v-hand { margin-left: 10px; }
.v-zoom { margin-left: 7px; }
.v-fit { margin-left: 9px; }
.v-disp { margin-left: 4px; }
.v-grid { margin-left: 6px; }
.v-views { margin-left: 3px; }

.timeline { flex: 1; background: #f0f0f0; border-top: 3px solid #cdcdcd; min-height: 0; }
.scroll { height: 7px; }
.thumb { width: 386px; height: 7px; margin-left: 4px; border-radius: 3px; background: #c6c6c6; }
.tl-row { display: flex; align-items: flex-start; margin-top: 4px; }
.player { display: flex; align-items: center; height: 24px; margin: 4px 0 0 4px; width: 138px; flex: none; }
.track {
  display: flex; flex: none; align-items: flex-start; width: 1254px; height: 30px;
  background:
    linear-gradient(#c6c6c6, #c6c6c6) 12px 100% / 1230px 2px no-repeat,
    repeating-linear-gradient(90deg, #c6c6c6 0 3px, transparent 3px 5px) 1242px 100% / 12px 2px no-repeat,
    repeating-linear-gradient(90deg, transparent 0 11px, #c6c6c6 11px 13px, transparent 13px 24px) 0 24px / 1248px 4px no-repeat;
}
.tl { width: 24px; height: 24px; flex: none; overflow: visible; }
.gear { margin: 7px 0 0 14px; flex: none; }
```
